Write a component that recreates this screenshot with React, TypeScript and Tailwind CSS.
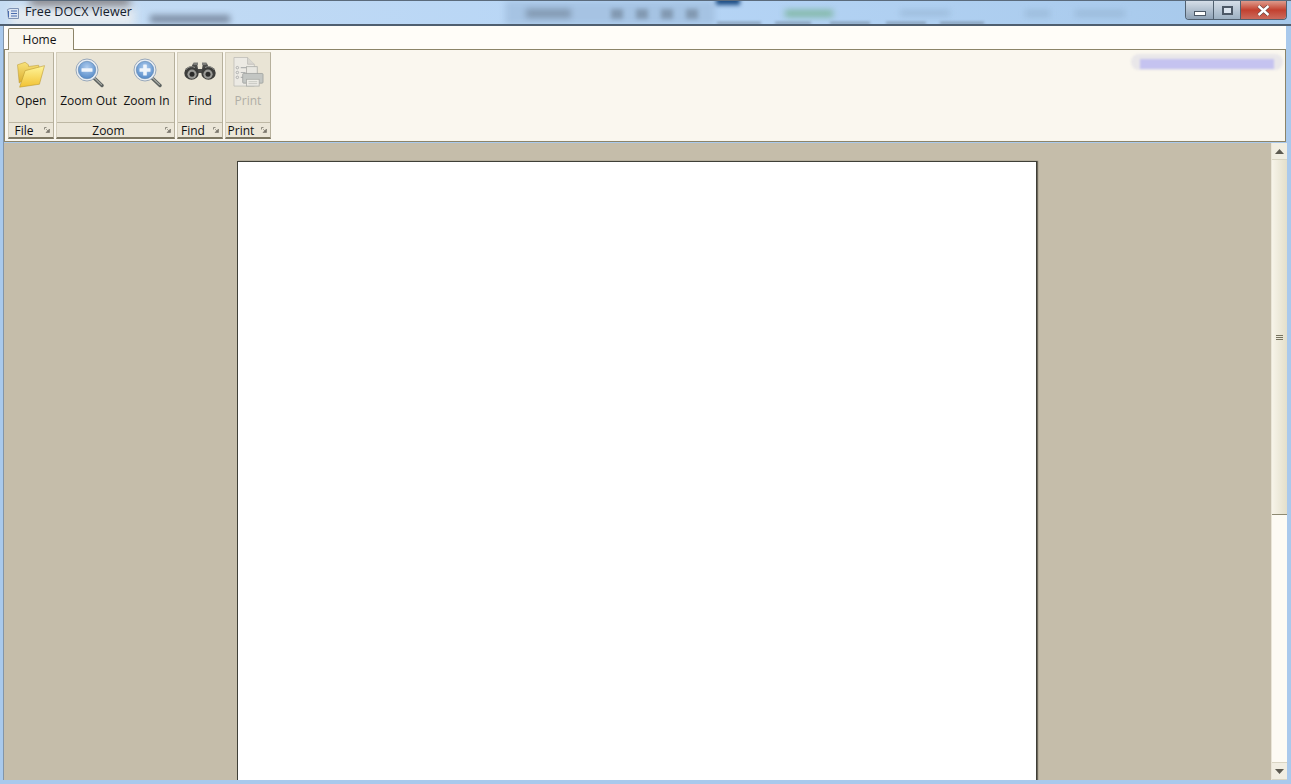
import React from "react";

const FONT = "font-['Open_Sans','Noto_Sans',sans-serif]";

function Folder() {
  return (
    <svg width="30" height="27" viewBox="0 0 34 32">
      <defs>
        <linearGradient id="fb" x1="0" y1="0" x2="0" y2="1">
          <stop offset="0" stopColor="#f8e27c" />
          <stop offset="1" stopColor="#dcae2e" />
        </linearGradient>
        <linearGradient id="ff" x1="0" y1="0" x2="0" y2="1">
          <stop offset="0" stopColor="#fff59a" />
          <stop offset="1" stopColor="#f2c233" />
        </linearGradient>
      </defs>
      <path d="M1 4.5 L10 1.5 L14 4.5 L14 6.5 L26 5 L27 9 L6 24 L3 26 Z" fill="url(#fb)" stroke="#b8952f" strokeWidth="0.6" />
      <path d="M10 11.5 L33 5.5 L27 27.5 L3.5 31 Z" fill="url(#ff)" stroke="#bd9a33" strokeWidth="0.7" />
    </svg>
  );
}

function Magnifier({ plus, id }: { plus?: boolean; id: string }) {
  return (
    <svg width="30" height="30" viewBox="0 0 30 30">
      <defs>
        <radialGradient id={id} cx="0.5" cy="0.35" r="0.7">
          <stop offset="0" stopColor="#b0cdee" />
          <stop offset="1" stopColor="#4f86c6" />
        </radialGradient>
      </defs>
      <line x1="19" y1="19" x2="28" y2="27.5" stroke="#5d6260" strokeWidth="3.4" strokeLinecap="round" />
      <line x1="19.5" y1="19" x2="27.5" y2="26.6" stroke="#a9aca6" strokeWidth="1.1" strokeLinecap="round" />
      <circle cx="13" cy="12" r="11" fill="#e9eef4" stroke="#98a8ba" strokeWidth="1" />
      <circle cx="13" cy="12" r="8.7" fill={`url(#${id})`} stroke="#5e84ad" strokeWidth="0.6" />
      <rect x="7.5" y="10.2" width="11" height="3.6" rx="0.6" fill="#f0f5fb" />
      {plus && <rect x="11.2" y="6.5" width="3.6" height="11" rx="0.6" fill="#f0f5fb" />}
    </svg>
  );
}

function Binoculars() {
  return (
    <svg width="32" height="19" viewBox="0 0 32 19">
      <path d="M9 1.5 L13 1 L14 7 L18 7 L19 1 L23 1.5 L25 6 L18 11 L14 11 L7 6 Z" fill="#4b4b49" />
      <rect x="9.5" y="0.5" width="4.5" height="2.5" fill="#7c7c79" />
      <rect x="18" y="0.5" width="4.5" height="2.5" fill="#7c7c79" />
      <ellipse cx="7.5" cy="11" rx="7.2" ry="6.8" fill="#3d3d3b" />
      <ellipse cx="24.5" cy="11" rx="7.2" ry="6.8" fill="#3d3d3b" />
      <circle cx="8" cy="12.2" r="4.6" fill="#9a9a96" />
      <circle cx="24" cy="12.2" r="4.6" fill="#9a9a96" />
      <circle cx="8" cy="12.2" r="2.5" fill="#2b2b2a" />
      <circle cx="24" cy="12.2" r="2.5" fill="#2b2b2a" />
      <path d="M2 7.5 Q6 3 11 5.5" stroke="#92928e" strokeWidth="1" fill="none" />
      <path d="M21 5.5 Q26 3 30 7.5" stroke="#92928e" strokeWidth="1" fill="none" />
    </svg>
  );
}

function Printer() {
  return (
    <svg width="31" height="31" viewBox="0 0 32 32">
      <path d="M1 0.5 H15 L22 7.5 V30 H1 Z" fill="#eceae4" stroke="#bdbcb6" strokeWidth="0.8" />
      <path d="M15 0.5 V7.5 H22" fill="#d9d7d0" stroke="#bdbcb6" strokeWidth="0.8" />
      <circle cx="4.5" cy="11" r="1.3" fill="none" stroke="#a3a5a4" strokeWidth="0.8" />
      <circle cx="4.5" cy="16" r="1.3" fill="none" stroke="#a3a5a4" strokeWidth="0.8" />
      <circle cx="4.5" cy="21" r="1.3" fill="none" stroke="#a3a5a4" strokeWidth="0.8" />
      <path d="M8 11 H17 M8 16 H13 M8 21 H13" stroke="#b0b2b1" strokeWidth="1.2" />
      <rect x="14" y="10" width="11" height="8" fill="#e8e7e1" stroke="#a9aaa6" strokeWidth="0.8" />
      <rect x="10" y="17" width="21" height="10" rx="1" fill="#c3c6c3" stroke="#9ea19e" strokeWidth="0.8" />
      <rect x="14" y="23" width="13" height="7" fill="#eeede7" stroke="#a9aaa6" strokeWidth="0.8" />
      <path d="M16 25.5 H25 M16 27.5 H25" stroke="#b5b6b1" strokeWidth="0.7" />
    </svg>
  );
}

function Launcher() {
  return (
    <svg width="6" height="6" viewBox="0 0 6 6" className="shrink-0">
      <path d="M0.5 2.5 V0.5 H2.5" stroke="#77736a" strokeWidth="0.8" fill="none" />
      <path d="M5.5 2 V5.5 H2 Z M2 2 L4.5 4.5" fill="#77736a" stroke="#77736a" strokeWidth="0.6" />
    </svg>
  );
}

function Tool({
  icon,
  label,
  disabled,
  width,
}: {
  icon: React.ReactNode;
  label: string;
  disabled?: boolean;
  width: string;
}) {
  return (
    <div className={`flex flex-col items-center ${width}`}>
      <div className="h-[33px] flex items-end justify-center">{icon}</div>
      <div className={`mt-[4px] h-[17px] leading-[17px] text-[12px] whitespace-nowrap ${disabled ? "text-[#b0aea6]" : "text-[#111111]"}`}>
        {label}
      </div>
    </div>
  );
}

function Group({ width, title, children }: { width: string; title: string; children: React.ReactNode }) {
  return (
    <div className={`${width} h-[87px] flex flex-col border border-[#d5cfbd] border-b-[#7d7763] border-b-2 border-r-[#b6b09c] bg-[#e9e4d5]`}>
      <div className="h-[69px] pt-[2px] flex justify-center">{children}</div>
      <div className="h-[15px] border-t border-[#bdb7a4] bg-[#ebe6d8] flex items-center pr-[3px] text-[12px] leading-[15px] text-[#111111]">
        <span className="flex-1 text-center pr-[5px]">{title}</span>
        <Launcher />
      </div>
    </div>
  );
}

function ScrollButton({ up }: { up?: boolean }) {
  return (
    <div className="h-[17px] bg-[#f1eee2] flex items-center justify-center border-b border-[#d9d5c3]">
      <svg width="9" height="5" viewBox="0 0 9 5">
        <path d={up ? "M4.5 0 L9 5 H0 Z" : "M0 0 H9 L4.5 5 Z"} fill="#5c5a50" />
      </svg>
    </div>
  );
}

export default function App() {
  return (
    <div className={`${FONT} relative w-[1291px] h-[784px] overflow-hidden flex flex-col bg-[#a9c9ec]`}>
      <div className="relative h-[26px] shrink-0 overflow-hidden bg-gradient-to-r from-[#c5dcf3] via-[#b6d5f6] to-[#a6c8ea] border-t border-[#5b6b7c] border-b-2 border-b-[#4f5f70]">
        {/* blurred desktop behind the glass title bar */}
        <div className="absolute left-[10px] top-[6px] w-[125px] h-[20px] bg-[#e9edf0] blur-[5px] opacity-90" />
        <div className="absolute left-[30px] top-[-6px] w-[100px] h-[11px] bg-[#6f625d] blur-[4px] opacity-70" />
        <div className="absolute left-[150px] top-[14px] w-[80px] h-[8px] bg-[#4f5a6e] blur-[3px] opacity-60" />
        <div className="absolute left-[505px] top-[0px] w-[210px] h-[24px] bg-[#9fbcdc] blur-[3px] opacity-70" />
        <div className="absolute left-[526px] top-[8px] w-[45px] h-[9px] bg-[#7a8fa6] blur-[3px] opacity-80" />
        <div className="absolute left-[611px] top-[8px] w-[12px] h-[10px] bg-[#7a8fa6] blur-[2px] opacity-80" />
        <div className="absolute left-[636px] top-[8px] w-[12px] h-[10px] bg-[#7a8fa6] blur-[2px] opacity-80" />
        <div className="absolute left-[661px] top-[8px] w-[12px] h-[10px] bg-[#7a8fa6] blur-[2px] opacity-80" />
        <div className="absolute left-[686px] top-[8px] w-[12px] h-[10px] bg-[#7a8fa6] blur-[2px] opacity-80" />
        <div className="absolute left-[716px] top-[-5px] w-[24px] h-[9px] bg-[#1e4e85] blur-[2px]" />
        <div className="absolute left-[785px] top-[9px] w-[48px] h-[7px] bg-[#7fb7a2] blur-[3px]" />
        <div className="absolute left-[900px] top-[9px] w-[50px] h-[6px] bg-[#95b4d2] blur-[3px] opacity-70" />
        <div className="absolute left-[1025px] top-[9px] w-[25px] h-[7px] bg-[#95b4d2] blur-[3px] opacity-70" />
        <div className="absolute left-[1075px] top-[9px] w-[50px] h-[7px] bg-[#95b4d2] blur-[3px] opacity-70" />
        <div className="absolute left-[717px] top-[21px] w-[44px] h-[2px] bg-[#44505e] blur-[1.5px] opacity-50" />
        <div className="absolute left-[775px] top-[21px] w-[36px] h-[2px] bg-[#44505e] blur-[1.5px] opacity-50" />
        <div className="absolute left-[830px] top-[21px] w-[40px] h-[2px] bg-[#44505e] blur-[1.5px] opacity-50" />
        <div className="absolute left-[886px] top-[21px] w-[40px] h-[2px] bg-[#44505e] blur-[1.5px] opacity-50" />
        <div className="absolute left-[940px] top-[21px] w-[44px] h-[2px] bg-[#44505e] blur-[1.5px] opacity-50" />

        <div className="relative flex items-center h-full pl-[7px]">
          <svg width="12" height="11" viewBox="0 0 12 11" className="shrink-0 mt-[1px]">
            <path d="M0.5 1.5 L3 0.5 H11.5 V10.5 H1.5 Z" fill="#dde6f2" stroke="#7f93b4" />
            <path d="M4 3 H10 M4 5.5 H10 M4 8 H10" stroke="#4a6cae" strokeWidth="1" />
            <path d="M1.5 3 V9" stroke="#4a6cae" strokeWidth="1" />
          </svg>
          <span className="ml-[6px] text-[12.5px] tracking-[0.1px] text-[#15202c]">Free DOCX Viewer</span>
        </div>

        <div className="absolute right-[4px] top-0 h-[19px] w-[102px] flex rounded-b-[4px] overflow-hidden border border-t-0 border-[#51606f]">
          <div className="w-[28px] border-r border-[#51606f] bg-gradient-to-b from-[#d5dee8] to-[#8fa2b6] flex items-end justify-center pb-[3px]">
            <div className="w-[12px] h-[5px] bg-white border border-[#4c5866]" />
          </div>
          <div className="w-[27px] border-r border-[#51606f] bg-gradient-to-b from-[#d5dee8] to-[#9db0c2] flex items-center justify-center">
            <div className="w-[11px] h-[9px] bg-[#dbe4ee] border-2 border-[#4c5866]" />
          </div>
          <div className="flex-1 bg-gradient-to-b from-[#dd9a8c] via-[#c2402f] to-[#cb6a5c] flex items-center justify-center">
            <svg width="13" height="11" viewBox="0 0 13 11">
              <path d="M1.5 1 L11.5 10 M11.5 1 L1.5 10" stroke="#4e3a38" strokeWidth="3.6" />
              <path d="M1.5 1 L11.5 10 M11.5 1 L1.5 10" stroke="#fff" strokeWidth="2.4" />
            </svg>
          </div>
        </div>
      </div>

      <div className="flex-1 flex flex-col min-h-0 ml-[3px] mr-[4px] mb-[4px] border-l border-[#8195aa]">
        <div className="h-[23px] shrink-0 bg-[#fffdf8] pl-[4px] mr-[1px] flex items-end">
          <div className="w-[66px] h-[22px] mb-[-1px] z-10 bg-[#faf7ef] border border-b-0 border-[#8c8468] rounded-t-[2px] flex items-center justify-center pr-[3px] text-[12px] text-[#111111]">
            Home
          </div>
        </div>

        <div className="relative h-[93px] shrink-0 mr-[1px] border border-[#8c8468] bg-[#faf7ef] pl-[3px] pt-[2px] flex gap-[2px]">
          <Group width="w-[46px]" title="File">
            <Tool width="w-[44px]" label="Open" icon={<Folder />} />
          </Group>
          <Group width="w-[119px]" title="Zoom">
            <div className="flex ml-[2px]">
              <Tool width="w-[60px]" label="Zoom Out" icon={<Magnifier id="zo" />} />
              <Tool width="w-[56px]" label="Zoom In" icon={<Magnifier id="zi" plus />} />
            </div>
          </Group>
          <Group width="w-[46px]" title="Find">
            <Tool width="w-[44px]" label="Find" icon={<div className="pb-[7px]"><Binoculars /></div>} />
          </Group>
          <Group width="w-[46px]" title="Print">
            <Tool width="w-[42px]" label="Print" disabled icon={<Printer />} />
          </Group>
          <div className="absolute right-[2px] top-[4px] w-[152px] h-[16px] rounded-full bg-[#e9e7e9] blur-[1px]">
            <div className="mx-[9px] mt-[5px] h-[10px] bg-[#c5c3f0] blur-[0.5px]" />
          </div>
        </div>

        <div className="flex-1 min-h-0 flex mt-[1px] bg-[#c5bdaa]">
          <div className="flex-1 min-w-0 pt-[18px] pl-[233px] overflow-hidden">
            <div className="w-[800px] h-[640px] bg-white border border-[#3f3f37] shadow-[1px_0_1px_#6d675a]" />
          </div>
          <div className="w-[16px] shrink-0 flex flex-col bg-[#fbf9f1] border-l border-[#e9e5d7]">
            <ScrollButton up />
            <div className="h-[355px] bg-gradient-to-r from-[#f7f4e9] to-[#e3dfcb] border-b border-[#8e8a72] flex items-center justify-center">
              <div className="w-[7px] h-[5px] border-y border-[#77735f] flex items-center">
                <div className="w-full h-px bg-[#77735f]" />
              </div>
            </div>
            <div className="flex-1 bg-[#fdfbf4]" />
            <div className="border-t border-[#d9d5c3]">
              <ScrollButton />
            </div>
          </div>
        </div>
      </div>
    </div>
  );
}
